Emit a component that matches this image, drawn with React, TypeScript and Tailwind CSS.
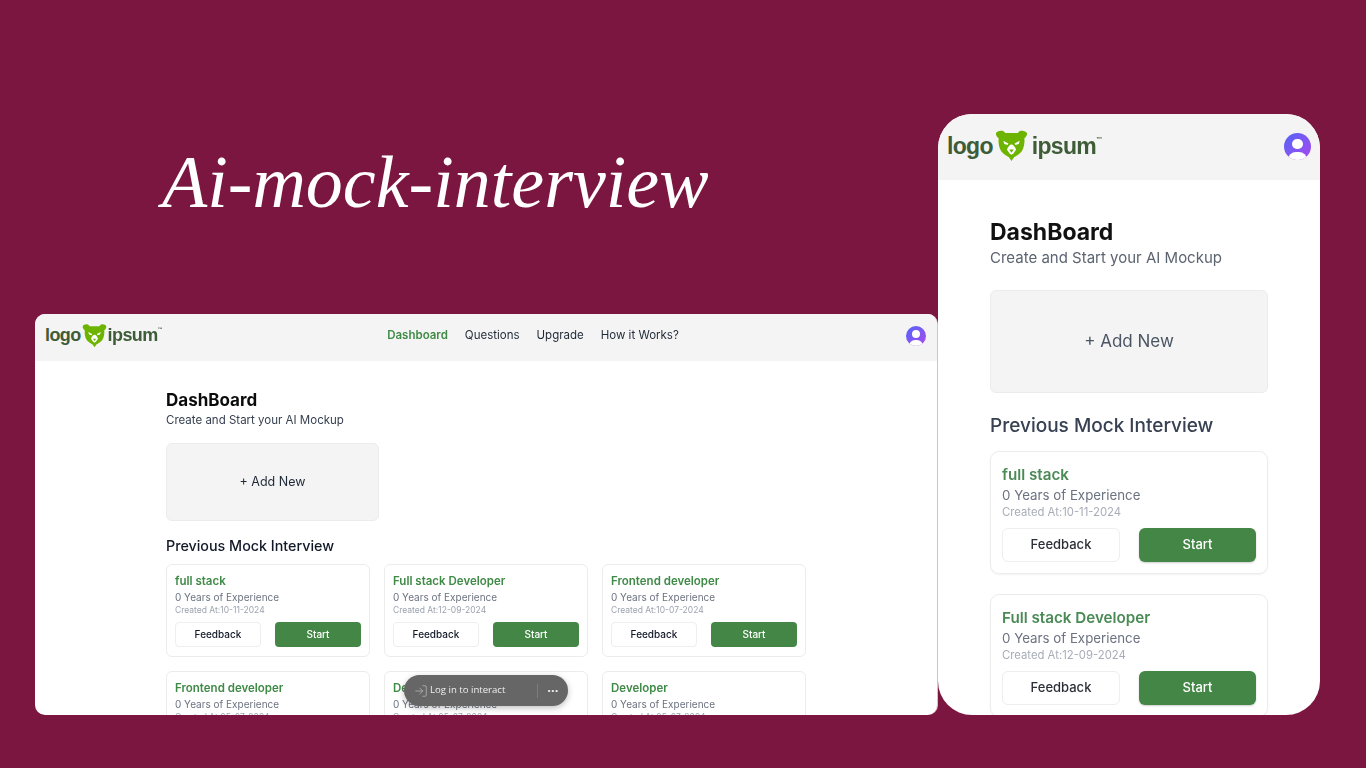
import { LogIn } from "lucide-react";

const cards = [
  { title: "full stack", date: "10-11-2024" },
  { title: "Full stack Developer", date: "12-09-2024" },
  { title: "Frontend developer", date: "10-07-2024" },
  { title: "Frontend developer", date: "05-07-2024" },
  { title: "Developer", date: "05-07-2024" },
  { title: "Developer", date: "05-07-2024" },
];

function Bear({ className }: { className: string }) {
  return (
    <svg viewBox="0 0 32 32" className={className}>
      <path
        fill="#6db400"
        d="M1 3.5C2 1.5 5 .5 8 1.5L10 3.5H22L24 1.5C27 .5 30 1.5 31 3.5C31.5 5.5 30 7.5 28.5 8.5C29 13 28 18 26 21C24 24 20 25.5 18.5 27L16 30.5L13.5 27C12 25.5 8 24 6 21C4 18 3 13 3.5 8.5C2 7.5 .5 5.5 1 3.5Z"
      />
      <path fill="#fff" d="M8 11L13 13.5L12.2 15L9 14ZM24 11L19 13.5L19.8 15L23 14Z" />
      <path fill="#fff" d="M16 14.5C18 14.5 19 16.5 20.5 19.5L18 23L16 24.5L14 23L11.5 19.5C13 16.5 14 14.5 16 14.5Z" />
      <path fill="#6db400" d="M13.8 19.5H18.2L16 22.5Z" />
    </svg>
  );
}

function Avatar({ className }: { className: string }) {
  return (
    <div className={`relative overflow-hidden rounded-full bg-gradient-to-br from-[#4b63f8] to-[#a745ee] ${className}`}>
      <div className="absolute left-[31%] top-[24%] h-[38%] w-[38%] rounded-full bg-white" />
      <div className="absolute left-[14%] top-[72%] h-[60%] w-[72%] rounded-full bg-white" />
    </div>
  );
}

function Logo({ big }: { big?: boolean }) {
  return (
    <div
      className={`flex items-center font-['Liberation_Sans',sans-serif] font-bold text-[#3f5c38] ${
        big ? "text-[23px] tracking-[-0.7px]" : "text-[18px] tracking-[-0.6px]"
      }`}
    >
      <span>logo</span>
      <Bear className={big ? "ml-[2px] mr-[4px] h-[34px] w-[33px]" : "mx-[1px] h-[26px] w-[25px]"} />
      <span>ipsum</span>
      <span className={big ? "-mt-[14px] text-[6px]" : "-mt-[11px] text-[5px]"}>™</span>
    </div>
  );
}

function WideCard({ title, date }: { title: string; date: string }) {
  return (
    <div className="h-[93px] rounded-[6px] border border-[#ececec] bg-white px-2 pt-[9px]">
      <div className="text-[11.5px] font-semibold leading-[14px] text-[#3f8a46]">{title}</div>
      <div className="mt-[3px] text-[10px] leading-[13px] text-[#6b7280]">0 Years of Experience</div>
      <div className="mt-[1px] text-[8.5px] leading-[11px] text-[#9ca3af]">Created At:{date}</div>
      <div className="mt-[6px] flex justify-between">
        <button className="h-[25px] w-[86px] rounded-[4px] border border-[#eeeeee] bg-white text-[10px] font-medium text-[#111827]">
          Feedback
        </button>
        <button className="h-[25px] w-[86px] rounded-[4px] bg-[#438645] text-[10px] font-medium text-white">
          Start
        </button>
      </div>
    </div>
  );
}

function NarrowCard({ title, date }: { title: string; date: string }) {
  return (
    <div className="h-[123px] shrink-0 rounded-[9px] border border-[#ececec] bg-white px-[11px] pt-[13px] shadow-[0_1px_2px_rgba(0,0,0,0.05)]">
      <div className="text-[15.2px] font-semibold leading-[20px] text-[#4a8a55]">{title}</div>
      <div className="mt-[1px] text-[13.3px] leading-[19px] text-[#6b7280]">0 Years of Experience</div>
      <div className="text-[11.3px] leading-[14px] text-[#a7adb8]">Created At:{date}</div>
      <div className="mt-[9px] flex justify-between">
        <button className="h-[34px] w-[118px] rounded-[6px] border border-[#eeeeee] bg-white text-[13px] font-medium text-[#2b2f38]">
          Feedback
        </button>
        <button className="h-[34px] w-[117px] rounded-[6px] bg-[#438645] text-[13px] font-medium text-white shadow-[0_1px_2px_rgba(0,0,0,0.2)]">
          Start
        </button>
      </div>
    </div>
  );
}

function DesktopWindow() {
  return (
    <div className="relative h-[401px] w-[903px] overflow-hidden rounded-[10px] border-r border-[#e6b8c9] bg-white blur-[0.3px]">
      <header className="flex h-[47px] items-center justify-between bg-[#f4f4f4] pb-[4px] pl-[10px] pr-[11px]">
        <Logo />
        <nav className="ml-[-2px] flex gap-[17px] text-[11.5px] text-[#1f2937]">
          <span className="font-semibold text-[#3f8a46]">Dashboard</span>
          <span>Questions</span>
          <span>Upgrade</span>
          <span>How it Works?</span>
        </nav>
        <Avatar className="h-[20px] w-[20px]" />
      </header>
      <main className="pl-[131px] pt-[29px]">
        <h2 className="text-[17px] font-bold leading-[21px] text-[#0b0b0b]">DashBoard</h2>
        <p className="mt-[1px] text-[11.5px] leading-[16px] text-[#374151]">Create and Start your AI Mockup</p>
        <div className="mt-[15px] flex h-[78px] w-[213px] items-center justify-center rounded-[6px] border border-[#ececec] bg-[#f4f4f4] text-[12.5px] text-[#1f2937]">
          + Add New
        </div>
        <h3 className="mt-[15px] text-[14.3px] font-medium leading-[20px] text-[#111827]">Previous Mock Interview</h3>
        <div className="mt-[8px] grid grid-cols-[204px_204px_204px] gap-[14px]">
          {cards.map((c, i) => (
            <WideCard key={i} title={c.title} date={c.date} />
          ))}
        </div>
      </main>
      <div className="absolute left-[369px] top-[361px] flex h-[31px] w-[164px] items-center rounded-full bg-[#666666] pl-[10px] font-['Open_Sans',sans-serif] text-[9.6px] text-[#eeeeee] shadow-[0_2px_6px_rgba(0,0,0,0.25)]">
        <LogIn className="h-[14px] w-[14px] text-[#bdbdbd]" strokeWidth={1.25} />
        <span className="ml-[2px]">Log in to interact</span>
        <div className="ml-[32px] h-[14px] w-px bg-[#7d7d7d]" />
        <span className="ml-[9px] text-[13px] font-bold leading-none">···</span>
      </div>
    </div>
  );
}

function MobileWindow() {
  return (
    <div className="flex h-[601px] w-[382px] flex-col overflow-hidden rounded-[34px] bg-white blur-[0.4px]">
      <header className="flex h-[66px] shrink-0 items-center justify-between bg-[#f4f4f4] pb-[2px] pl-[9px] pr-[9px]">
        <Logo big />
        <Avatar className="h-[27px] w-[27px]" />
      </header>
      <main className="flex min-h-0 flex-col px-[52px] pt-[38px]">
        <h2 className="text-[23px] font-bold leading-[28px] text-[#111]">DashBoard</h2>
        <p className="text-[15px] leading-[24px] text-[#5b6470]">Create and Start your AI Mockup</p>
        <div className="mt-[20px] flex h-[103px] shrink-0 items-center justify-center rounded-[6px] border border-[#ececec] bg-[#f4f4f4] text-[17px] text-[#4b5563]">
          + Add New
        </div>
        <h3 className="mt-[19px] text-[19px] font-medium leading-[28px] text-[#374151]">Previous Mock Interview</h3>
        <div className="mt-[11px] flex flex-col gap-[20px]">
          <NarrowCard title={cards[0].title} date={cards[0].date} />
          <NarrowCard title={cards[1].title} date={cards[1].date} />
        </div>
      </main>
    </div>
  );
}

export default function App() {
  return (
    <div className="flex h-[768px] w-[1366px] items-end overflow-hidden bg-[#7b1640] pb-[53px] pl-[35px] font-['Inter',sans-serif]">
      <div className="w-[903px]">
        <h1 className="mb-[86px] pl-[127px] font-['Liberation_Serif',serif] text-[74px] italic leading-[92px] text-white">
          Ai-mock-interview
        </h1>
        <DesktopWindow />
      </div>
      <MobileWindow />
    </div>
  );
}
